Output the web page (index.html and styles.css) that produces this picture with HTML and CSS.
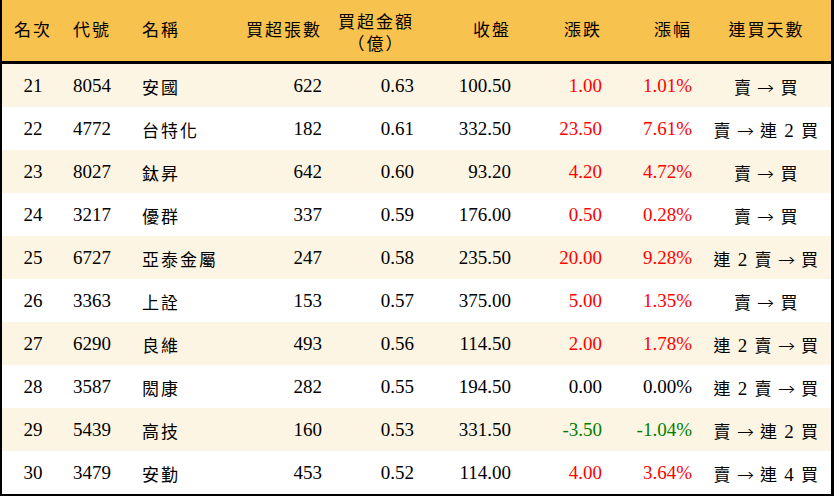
FILE: index.html
```html
<!DOCTYPE html>
<html lang="zh-Hant">
<head>
<meta charset="utf-8">
<title>買超排行</title>
<link rel="stylesheet" href="styles.css">
</head>
<body>
<table class="rank">
  <colgroup>
    <col class="c-rank"><col class="c-code"><col class="c-name"><col class="c-vol"><col class="c-amt"><col class="c-close"><col class="c-chg"><col class="c-pct"><col class="c-days">
  </colgroup>
  <thead>
    <tr>
      <th class="center zh">名次</th>
      <th class="left zh">代號</th>
      <th class="left zh">名稱</th>
      <th class="right zh">買超張數</th>
      <th class="right zh"><span class="stack">買超金額<br>（億）</span></th>
      <th class="right zh">收盤</th>
      <th class="right zh">漲跌</th>
      <th class="right zh">漲幅</th>
      <th class="center zh">連買天數</th>
    </tr>
  </thead>
  <tbody>
    <tr><td class="center">21</td><td class="left">8054</td><td class="left zh">安國</td><td class="right">622</td><td class="right">0.63</td><td class="right">100.50</td><td class="right up">1.00</td><td class="right up">1.01%</td><td class="center days">賣 <span class="arrow">→</span> 買</td></tr>
    <tr><td class="center">22</td><td class="left">4772</td><td class="left zh">台特化</td><td class="right">182</td><td class="right">0.61</td><td class="right">332.50</td><td class="right up">23.50</td><td class="right up">7.61%</td><td class="center days">賣 <span class="arrow">→</span> 連 <span class="num">2</span> 買</td></tr>
    <tr><td class="center">23</td><td class="left">8027</td><td class="left zh">鈦昇</td><td class="right">642</td><td class="right">0.60</td><td class="right">93.20</td><td class="right up">4.20</td><td class="right up">4.72%</td><td class="center days">賣 <span class="arrow">→</span> 買</td></tr>
    <tr><td class="center">24</td><td class="left">3217</td><td class="left zh">優群</td><td class="right">337</td><td class="right">0.59</td><td class="right">176.00</td><td class="right up">0.50</td><td class="right up">0.28%</td><td class="center days">賣 <span class="arrow">→</span> 買</td></tr>
    <tr><td class="center">25</td><td class="left">6727</td><td class="left zh">亞泰金屬</td><td class="right">247</td><td class="right">0.58</td><td class="right">235.50</td><td class="right up">20.00</td><td class="right up">9.28%</td><td class="center days">連 <span class="num">2</span> 賣 <span class="arrow">→</span> 買</td></tr>
    <tr><td class="center">26</td><td class="left">3363</td><td class="left zh">上詮</td><td class="right">153</td><td class="right">0.57</td><td class="right">375.00</td><td class="right up">5.00</td><td class="right up">1.35%</td><td class="center days">賣 <span class="arrow">→</span> 買</td></tr>
    <tr><td class="center">27</td><td class="left">6290</td><td class="left zh">良維</td><td class="right">493</td><td class="right">0.56</td><td class="right">114.50</td><td class="right up">2.00</td><td class="right up">1.78%</td><td class="center days">連 <span class="num">2</span> 賣 <span class="arrow">→</span> 買</td></tr>
    <tr><td class="center">28</td><td class="left">3587</td><td class="left zh">閎康</td><td class="right">282</td><td class="right">0.55</td><td class="right">194.50</td><td class="right">0.00</td><td class="right">0.00%</td><td class="center days">連 <span class="num">2</span> 賣 <span class="arrow">→</span> 買</td></tr>
    <tr><td class="center">29</td><td class="left">5439</td><td class="left zh">高技</td><td class="right">160</td><td class="right">0.53</td><td class="right">331.50</td><td class="right down">-3.50</td><td class="right down">-1.04%</td><td class="center days">賣 <span class="arrow">→</span> 連 <span class="num">2</span> 買</td></tr>
    <tr><td class="center">30</td><td class="left">3479</td><td class="left zh">安勤</td><td class="right">453</td><td class="right">0.52</td><td class="right">114.00</td><td class="right up">4.00</td><td class="right up">3.64%</td><td class="center days">賣 <span class="arrow">→</span> 連 <span class="num">4</span> 買</td></tr>
  </tbody>
</table>
</body>
</html>
```

FILE: styles.css
```css
html, body {
  margin: 0;
  padding: 0;
  background: #ffffff;
}

.rank {
  width: 834px;
  border-collapse: separate;
  border-spacing: 0;
  table-layout: fixed;
  box-sizing: border-box;
  border-left: 2px solid #000;
  border-right: 3px solid #000;
  border-bottom: 2px solid #000;
  font-family: "Liberation Serif", "Noto Sans CJK TC", serif;
  font-size: 19px;
  color: #000;
}

.c-rank { width: 62px; }
.c-code { width: 69px; }
.c-name { width: 97px; }
.c-vol { width: 102px; }
.c-amt { width: 92px; }
.c-close { width: 97px; }
.c-chg { width: 91px; }
.c-pct { width: 90px; }
.c-days { width: 129px; }

.rank thead th {
  height: 61px;
  box-sizing: content-box;
  background: #f8c24f;
  font-weight: normal;
  font-size: 17px;
  border-bottom: 3px solid #000;
  padding-top: 0;
  padding-bottom: 0;
  line-height: 22px;
}

.rank td {
  height: 43px;
  padding-top: 1px;
  padding-bottom: 0;
  white-space: nowrap;
  box-sizing: border-box;
}

.rank tbody tr:nth-child(odd) td {
  background: #fdf5e3;
}

.rank tbody tr:nth-child(even) td {
  background: #ffffff;
}

.center {
  text-align: center;
  padding-left: 0;
  padding-right: 0;
}

.left {
  text-align: left;
  padding-left: 9px;
  padding-right: 0;
}

.right {
  text-align: right;
  padding-right: 10px;
  padding-left: 0;
}

.zh {
  letter-spacing: 2px;
}

.rank td.zh {
  font-size: 17px;
}

.stack {
  display: inline-block;
  text-align: center;
  line-height: 22px;
  padding-top: 6px;
}

.days {
  font-size: 17px;
  letter-spacing: 1.5px;
}

.num {
  font-size: 19px;
}

.arrow {
  font-family: "DejaVu Sans", sans-serif;
  font-size: 18px;
  display: inline-block;
  transform: scaleX(1.15);
  font-weight: 300;
}

.up {
  color: #ff0000;
}

.down {
  color: #008000;
}
```
